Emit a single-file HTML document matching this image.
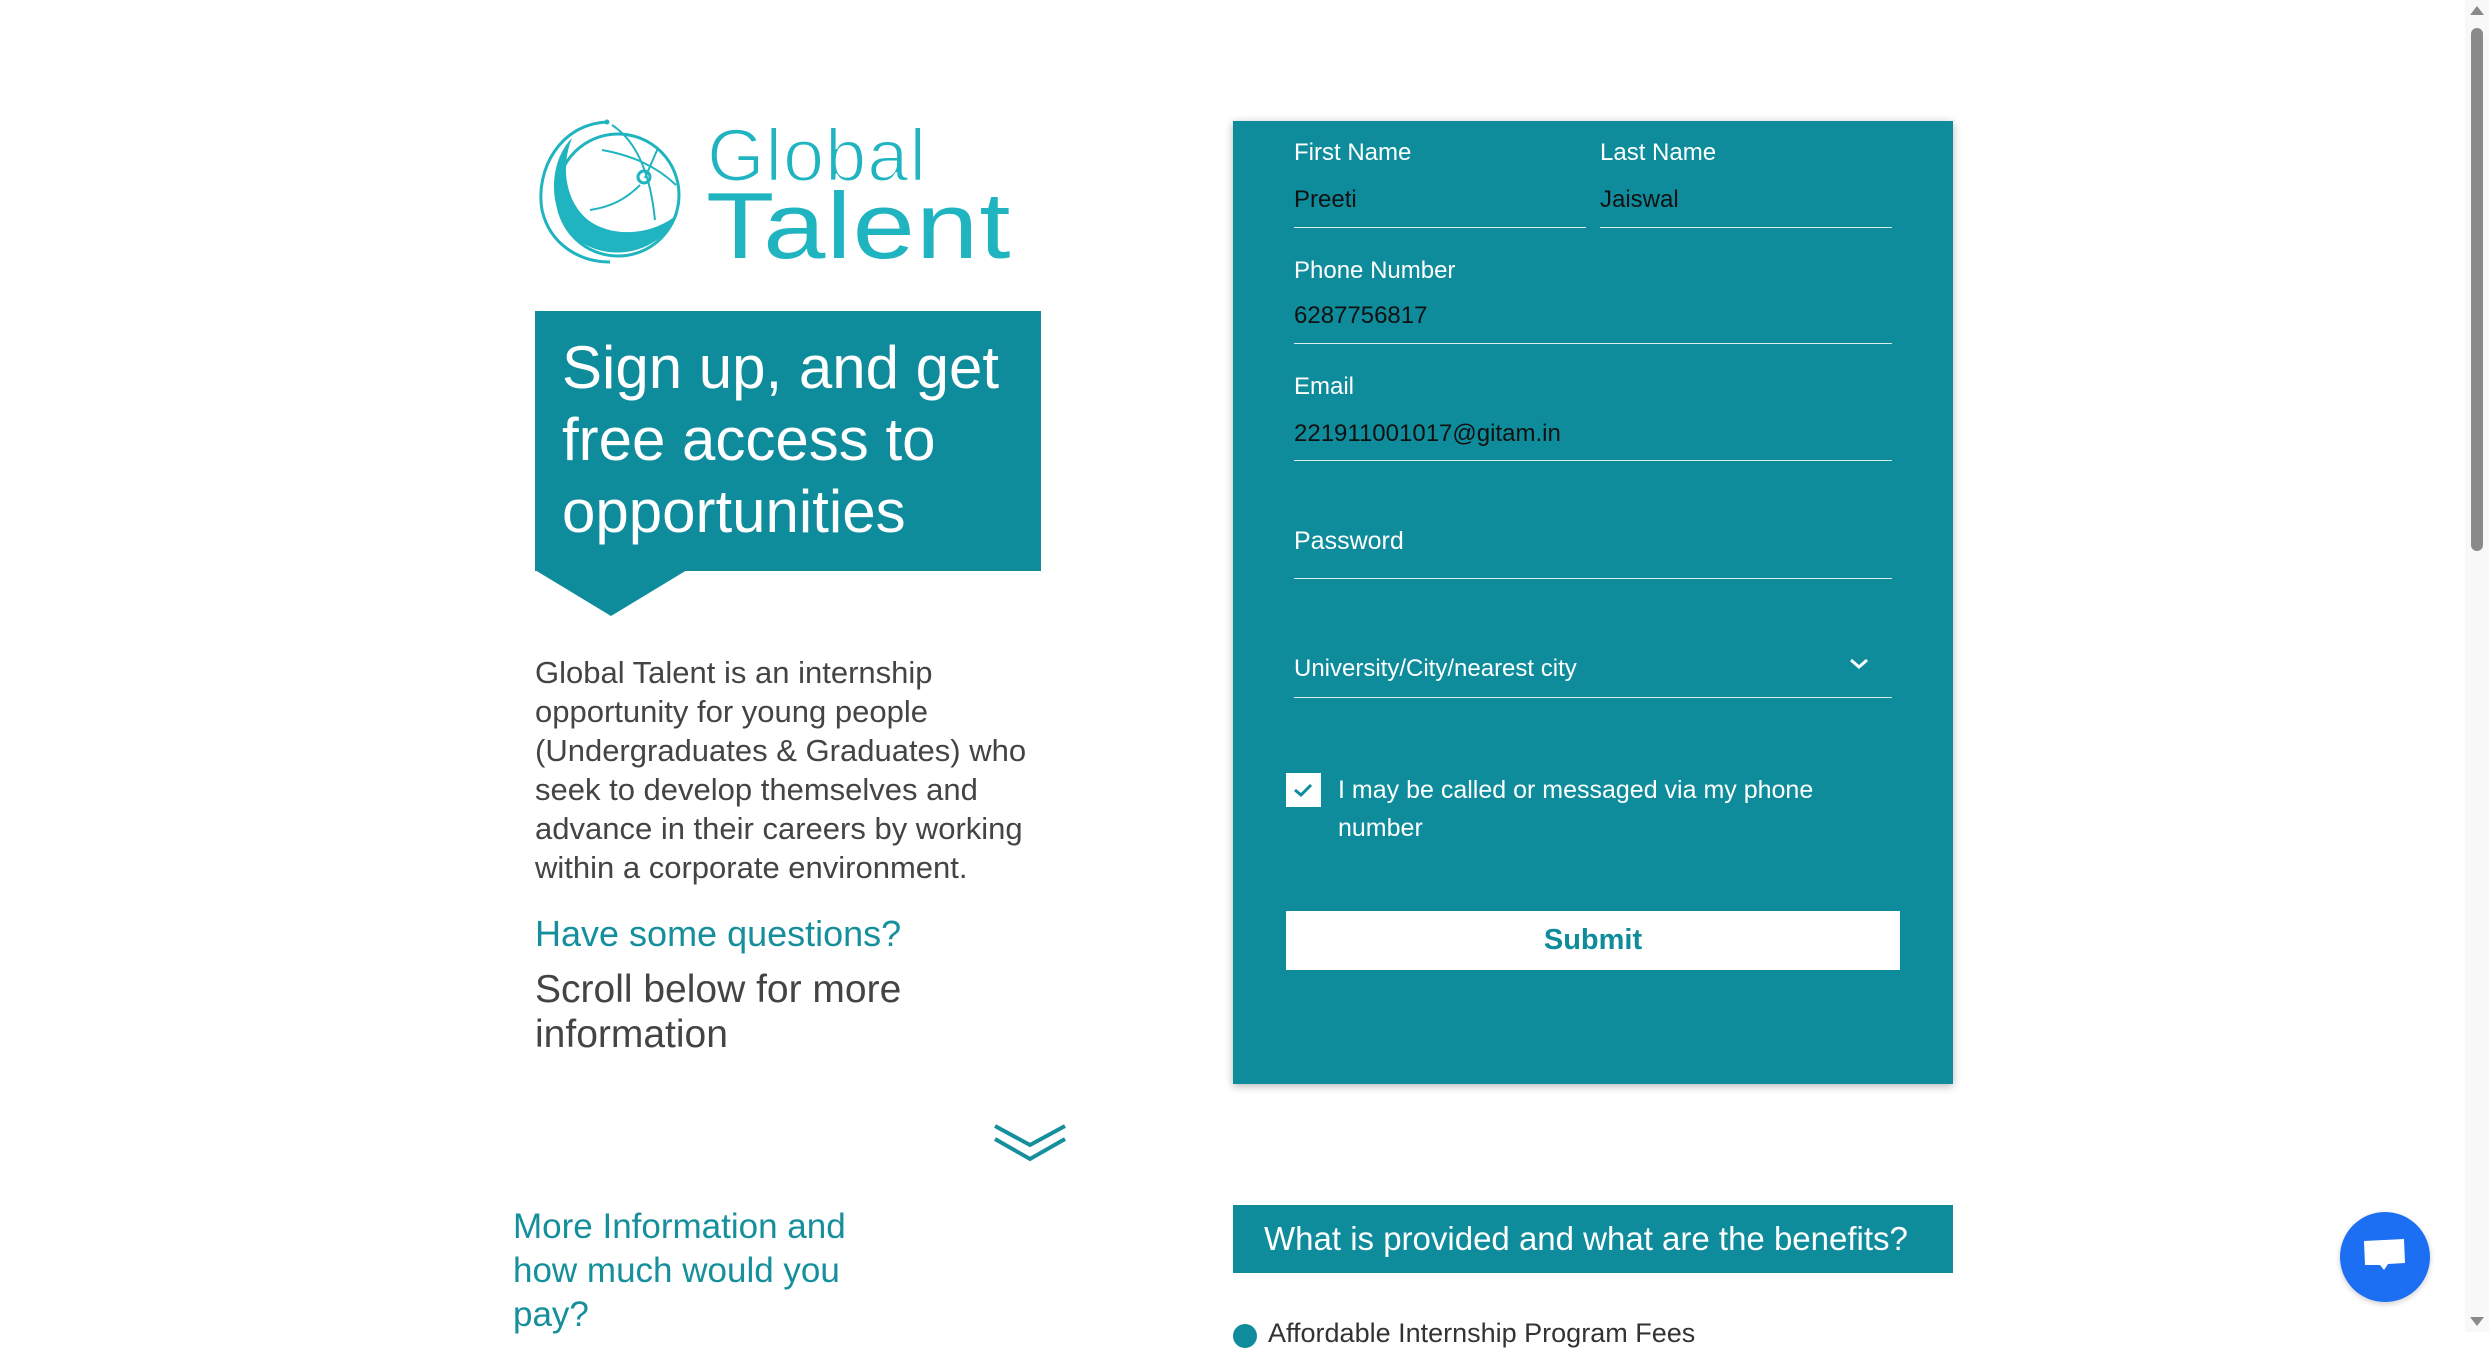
<!DOCTYPE html>
<html><head><meta charset="utf-8"><style>
*{margin:0;padding:0;box-sizing:border-box}
body{width:2489px;height:1332px;overflow:hidden;background:#fff;font-family:"Liberation Sans",Arial,sans-serif;position:relative}
.a{position:absolute;white-space:nowrap}
.lbl{color:#fff;font-size:24px}
.val{color:#111;font-size:24px}
.line{position:absolute;height:1px;background:#d8eef1}
</style></head><body>
<!-- logo -->
<svg class="a" style="left:530px;top:110px" width="160" height="160" viewBox="0 0 160 160">
<g fill="none" stroke="#1fb4c0">
<path d="M77,12 C30,14 5,60 12,100 C20,135 50,152 80,152" stroke-width="3"/>
<circle cx="88" cy="85" r="61" stroke-width="3"/>
<path d="M82,15 C105,30 120,60 125,110" stroke-width="2"/>
<path d="M72,40 C100,45 125,55 146,75" stroke-width="2"/>
<path d="M128,38 L115,68 M110,75 C95,90 80,97 60,100" stroke-width="2"/>
<circle cx="114" cy="67" r="6" stroke-width="3"/>
</g>
<path d="M42,28 C18,52 16,105 48,130 C78,152 128,146 148,104 C122,126 82,128 58,110 C36,92 30,58 42,28Z" fill="#1fb4c0"/>
<circle cx="77" cy="12" r="2.5" fill="#1fb4c0"/>
</svg>
<div class="a" style="left:707px;top:113px;font-size:74px;color:#1fb4c0;letter-spacing:1px;-webkit-text-stroke:2px #fff">Global</div>
<div class="a" style="left:706px;top:172px;font-size:94px;color:#1fb4c0;letter-spacing:1px;transform:scaleX(1.19);transform-origin:0 0">Talent</div>
<!-- banner -->
<div class="a" style="left:535px;top:311px;width:506px;height:260px;background:#0e8c9c"></div>
<svg class="a" style="left:535px;top:570px" width="152" height="48"><polygon points="0,0 152,0 76,46" fill="#0e8c9c"/></svg>
<div class="a" style="left:562px;top:332px;font-size:60px;line-height:72px;color:#fff">Sign up, and get<br>free access to<br>opportunities</div>
<div class="a" style="left:535px;top:653px;font-size:31px;line-height:39px;color:#444">Global Talent is an internship<br>opportunity for young people<br>(Undergraduates &amp; Graduates) who<br>seek to develop themselves and<br>advance in their careers by working<br>within a corporate environment.</div>
<div class="a" style="left:535px;top:913px;font-size:36px;color:#168f9c">Have some questions?</div>
<div class="a" style="left:535px;top:967px;font-size:39px;line-height:45px;color:#444">Scroll below for more<br>information</div>
<svg class="a" style="left:992px;top:1123px" width="76" height="40"><path d="M3,3 L38,22 L73,3 M3,16 L38,36 L73,16" fill="none" stroke="#168f9c" stroke-width="4"/></svg>
<!-- form -->
<div class="a" style="left:1233px;top:121px;width:720px;height:963px;background:#0e8c9c;box-shadow:0 2px 8px rgba(0,0,0,.3)"></div>
<div class="a lbl" style="left:1294px;top:139px">First Name</div>
<div class="a lbl" style="left:1600px;top:139px">Last Name</div>
<div class="a val" style="left:1294px;top:186px">Preeti</div>
<div class="a val" style="left:1600px;top:186px">Jaiswal</div>
<div class="line" style="left:1294px;top:227px;width:292px"></div>
<div class="line" style="left:1600px;top:227px;width:292px"></div>
<div class="a lbl" style="left:1294px;top:257px">Phone Number</div>
<div class="a val" style="left:1294px;top:302px">6287756817</div>
<div class="line" style="left:1294px;top:343px;width:598px"></div>
<div class="a lbl" style="left:1294px;top:373px">Email</div>
<div class="a val" style="left:1294px;top:420px">221911001017@gitam.in</div>
<div class="line" style="left:1294px;top:460px;width:598px"></div>
<div class="a lbl" style="left:1294px;top:527px;font-size:25px">Password</div>
<div class="line" style="left:1294px;top:578px;width:598px"></div>
<div class="a lbl" style="left:1294px;top:655px">University/City/nearest city</div>
<svg class="a" style="left:1849px;top:657px" width="20" height="14"><path d="M2,3 L10,10 L18,3" fill="none" stroke="#fff" stroke-width="3"/></svg>
<div class="line" style="left:1294px;top:697px;width:598px"></div>
<div class="a" style="left:1286px;top:773px;width:35px;height:34px;background:#fff"></div>
<svg class="a" style="left:1290px;top:777px" width="26" height="26"><path d="M5,13 L11,18 L21,8" fill="none" stroke="#0e8c9c" stroke-width="3"/></svg>
<div class="a lbl" style="left:1338px;top:771px;font-size:25px;line-height:38px">I may be called or messaged via my phone<br>number</div>
<div class="a" style="left:1286px;top:911px;width:614px;height:59px;background:#fff;color:#0e8c9c;font-weight:bold;font-size:29px;text-align:center;line-height:59px">Submit</div>
<!-- bottom -->
<div class="a" style="left:513px;top:1205px;font-size:35px;line-height:44px;color:#168f9c">More Information and<br>how much would you<br>pay?</div>
<div class="a" style="left:1233px;top:1205px;width:720px;height:68px;background:#0e8c9c;color:#fff;font-size:33px;line-height:68px;padding-left:31px">What is provided and what are the benefits?</div>
<div class="a" style="left:1233px;top:1324px;width:24px;height:24px;border-radius:50%;background:#0e8c9c"></div>
<div class="a" style="left:1268px;top:1318px;font-size:27px;color:#333">Affordable Internship Program Fees</div>
<!-- chat -->
<div class="a" style="left:2340px;top:1212px;width:90px;height:90px;border-radius:50%;background:#1c6ef2;box-shadow:0 2px 6px rgba(0,0,0,.2)"></div>
<svg class="a" style="left:2360px;top:1235px" width="50" height="50"><path d="M4,6 L44,4 L45,28 L28,29 L24,35 L20,30 L5,30 Z" fill="#fff"/></svg>
<!-- scrollbar -->
<div class="a" style="left:2465px;top:0;width:24px;height:1332px;background:#f8f8f8"></div>
<svg class="a" style="left:2468px;top:4px" width="18" height="14"><polygon points="9,2 16,11 2,11" fill="#8a8a8a"/></svg>
<div class="a" style="left:2471px;top:28px;width:12px;height:523px;background:#8a8a8a;border-radius:6px"></div>
<svg class="a" style="left:2468px;top:1314px" width="18" height="14"><polygon points="2,3 16,3 9,12" fill="#8a8a8a"/></svg>
</body></html>
